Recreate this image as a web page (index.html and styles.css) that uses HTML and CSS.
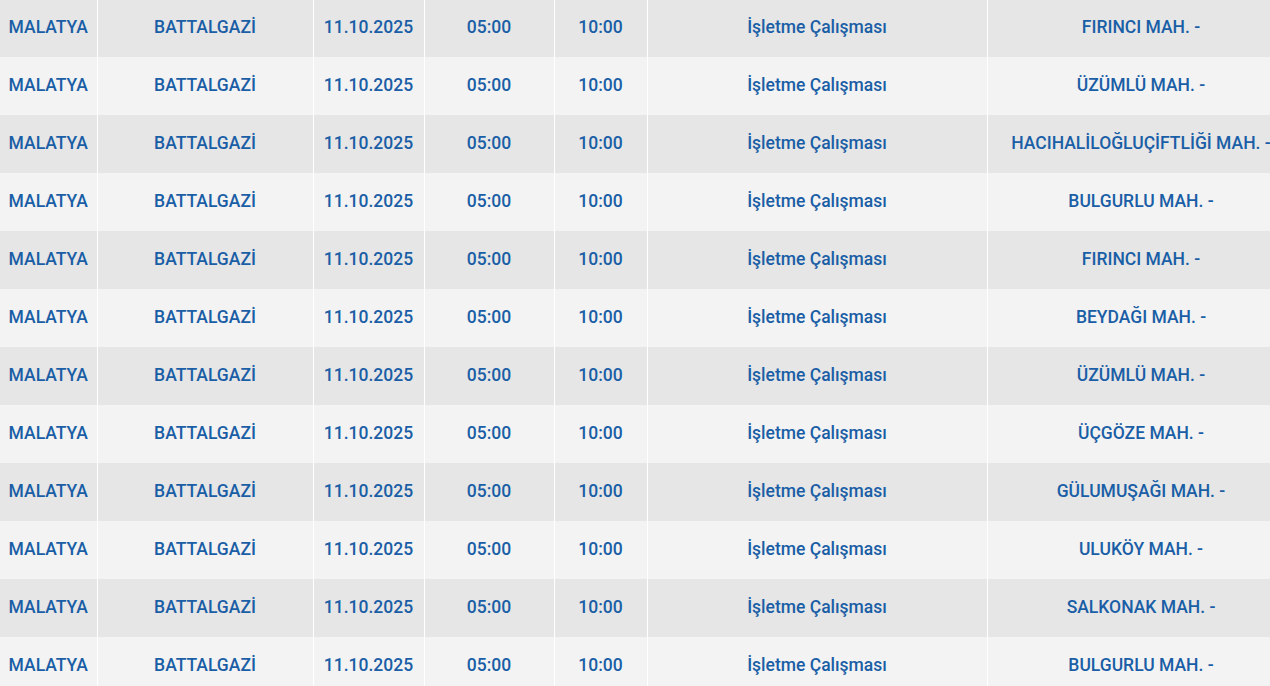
FILE: index.html
```html
<!DOCTYPE html>
<html lang="tr">
<head>
<meta charset="utf-8">
<link rel="stylesheet" href="styles.css">
</head>
<body>
<div class="wrap">
<table class="outages">
<colgroup>
<col class="c1"><col class="c2"><col class="c3"><col class="c4"><col class="c5"><col class="c6"><col class="c7">
</colgroup>
<tbody>
<tr><td>MALATYA</td><td>BATTALGAZİ</td><td>11.10.2025</td><td>05:00</td><td>10:00</td><td>İşletme Çalışması</td><td>FIRINCI MAH. -</td></tr>
<tr><td>MALATYA</td><td>BATTALGAZİ</td><td>11.10.2025</td><td>05:00</td><td>10:00</td><td>İşletme Çalışması</td><td>ÜZÜMLÜ MAH. -</td></tr>
<tr><td>MALATYA</td><td>BATTALGAZİ</td><td>11.10.2025</td><td>05:00</td><td>10:00</td><td>İşletme Çalışması</td><td>HACIHALİLOĞLUÇİFTLİĞİ MAH. -</td></tr>
<tr><td>MALATYA</td><td>BATTALGAZİ</td><td>11.10.2025</td><td>05:00</td><td>10:00</td><td>İşletme Çalışması</td><td>BULGURLU MAH. -</td></tr>
<tr><td>MALATYA</td><td>BATTALGAZİ</td><td>11.10.2025</td><td>05:00</td><td>10:00</td><td>İşletme Çalışması</td><td>FIRINCI MAH. -</td></tr>
<tr><td>MALATYA</td><td>BATTALGAZİ</td><td>11.10.2025</td><td>05:00</td><td>10:00</td><td>İşletme Çalışması</td><td>BEYDAĞI MAH. -</td></tr>
<tr><td>MALATYA</td><td>BATTALGAZİ</td><td>11.10.2025</td><td>05:00</td><td>10:00</td><td>İşletme Çalışması</td><td>ÜZÜMLÜ MAH. -</td></tr>
<tr><td>MALATYA</td><td>BATTALGAZİ</td><td>11.10.2025</td><td>05:00</td><td>10:00</td><td>İşletme Çalışması</td><td>ÜÇGÖZE MAH. -</td></tr>
<tr><td>MALATYA</td><td>BATTALGAZİ</td><td>11.10.2025</td><td>05:00</td><td>10:00</td><td>İşletme Çalışması</td><td>GÜLUMUŞAĞI MAH. -</td></tr>
<tr><td>MALATYA</td><td>BATTALGAZİ</td><td>11.10.2025</td><td>05:00</td><td>10:00</td><td>İşletme Çalışması</td><td>ULUKÖY MAH. -</td></tr>
<tr><td>MALATYA</td><td>BATTALGAZİ</td><td>11.10.2025</td><td>05:00</td><td>10:00</td><td>İşletme Çalışması</td><td>SALKONAK MAH. -</td></tr>
<tr><td>MALATYA</td><td>BATTALGAZİ</td><td>11.10.2025</td><td>05:00</td><td>10:00</td><td>İşletme Çalışması</td><td>BULGURLU MAH. -</td></tr>
</tbody>
</table>
</div>
</body>
</html>
```

FILE: styles.css
```css
html, body {
  margin: 0;
  padding: 0;
  background: #f3f3f3;
  overflow: hidden;
}
.wrap {
  width: 1270px;
  height: 686px;
  overflow: hidden;
}
.outages {
  width: 1295px;
  margin-top: -1px;
  border-collapse: collapse;
  table-layout: fixed;
  font-family: Roboto, "Liberation Sans", sans-serif;
  font-size: 17.5px;
  font-weight: 500;
  color: #1a5ea6;
}
.c1 { width: 97px; }
.c2 { width: 216px; }
.c3 { width: 111px; }
.c4 { width: 130px; }
.c5 { width: 93px; }
.c6 { width: 340px; }
.c7 { width: 308px; }
.outages td {
  height: 58px;
  padding: 0 0 2px 0;
  text-align: center;
  vertical-align: middle;
  white-space: nowrap;
  border-right: 1px solid #ffffff;
  box-sizing: border-box;
}
.outages tr:nth-child(odd) td { background: #e6e6e6; }
.outages tr:nth-child(even) td { background: #f3f3f3; }
```
